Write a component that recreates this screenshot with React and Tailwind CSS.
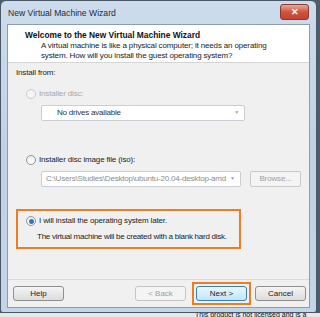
import React from 'react';

const font = { fontFamily: '"Liberation Sans", Arial, sans-serif' };

const Radio = ({ checked, disabled }) => (
  <span
    className={`inline-flex items-center justify-center w-[10px] h-[10px] rounded-full border ${
      disabled ? 'border-[#cbcbcb] bg-[#f4f4f4]' : 'border-[#8a96a3] bg-gradient-to-b from-[#e8ecf0] to-[#ffffff]'
    }`}
  >
    {checked && <span className="w-[5px] h-[5px] rounded-full bg-[#2f78c4]" />}
  </span>
);

const Combo = ({ text, disabled }) => (
  <div className="flex items-center w-[204px] h-[16px] border border-[#c9ced4] bg-white rounded-[2px] pr-[5px]">
    <span
      className={`flex-1 whitespace-nowrap text-[8px] tracking-[-0.2px] ${
        disabled ? 'pl-[15px] text-[#333]' : 'pl-[4px] text-[#8d8d8d]'
      }`}
    >
      {text}
    </span>
    <span className="ml-[4px] text-[5px] text-[#a0a0a0]">▼</span>
  </div>
);

const Btn = ({ children, disabled, primary }) => (
  <div
    className={`flex items-center justify-center w-[51px] h-[15px] rounded-[3px] border text-[8px] ${
      primary
        ? 'border-[#3c7fb1] bg-gradient-to-b from-[#eaf6fd] to-[#bee6fd] text-[#222]'
        : disabled
        ? 'border-[#c4c4c4] bg-[#f4f4f4] text-[#a0a0a0]'
        : 'border-[#8e8f8f] bg-gradient-to-b from-[#f4f4f4] to-[#dcdcdc] text-[#222]'
    }`}
  >
    {children}
  </div>
);

export default function App() {
  return (
    <div className="w-[320px] h-[317px] bg-[#4f5d6b] overflow-hidden" style={font}>
      <div className="w-[317px] h-[313px] rounded-t-[6px] rounded-b-[3px] border border-[#4a5866] bg-gradient-to-b from-[#cddcec] via-[#bfd2e6] to-[#c4d5e7] flex flex-col">
        <div className="h-[23px] flex items-start justify-between pl-[7px] pr-[7px]">
          <span className="mt-[7px] text-[8.6px] leading-[11px] text-[#1e2a36]">New Virtual Machine Wizard</span>
          <div className="mt-[3px] w-[29px] h-[16px] rounded-[3px] border border-[#8a3a30] bg-gradient-to-b from-[#e9a89a] via-[#d0533f] to-[#c24430] flex items-center justify-center">
            <span className="text-[9px] font-bold text-white leading-none">✕</span>
          </div>
        </div>
        <div className="mx-[6px] mb-[4px] flex-1 border border-[#8d9baa] bg-[#f0f0f0] flex flex-col tracking-[-0.15px]">
          <div className="h-[38px] bg-white border-b border-[#d5d5d5] pl-[17px] pt-[4px]">
            <div className="text-[8.4px] font-bold text-[#111] leading-[12px] tracking-normal">Welcome to the New Virtual Machine Wizard</div>
            <div className="pl-[16px] text-[8px] text-[#222] leading-[10px]">
              A virtual machine is like a physical computer; it needs an operating
              <br />
              system. How will you install the guest operating system?
            </div>
          </div>
          <div className="flex-1 flex flex-col pl-[8px] pr-[8px]">
            <div className="mt-[4px] text-[8px] text-[#222] leading-[12px]">Install from:</div>
            <div className="mt-[9px] flex items-center gap-[3px] pl-[10px] text-[8px] text-[#a8a8a8] leading-[12px]">
              <Radio disabled />
              <span>Installer disc:</span>
            </div>
            <div className="mt-[5px] pl-[25px]">
              <Combo text="No drives available" disabled />
            </div>
            <div className="mt-[33px] flex items-center gap-[3px] pl-[10px] text-[8px] text-[#222] leading-[12px]">
              <Radio />
              <span>Installer disc image file (iso):</span>
            </div>
            <div className="mt-[5px] pl-[25px] flex items-center gap-[9px]">
              <Combo text="C:\Users\Studies\Desktop\ubuntu-20.04-desktop-amd" />
              <div className="w-[55px] h-[16px] border border-[#c9c9c9] rounded-[2px] bg-[#f4f4f4] flex items-center justify-center text-[8px] text-[#a0a0a0]">
                Browse...
              </div>
            </div>
            <div className="mt-[22px] w-[225px] h-[40px] border-2 border-[#ef7b22] pl-[8px] pt-[4px]">
              <div className="flex items-center gap-[3px] text-[8px] text-[#222] leading-[12px]">
                <Radio checked />
                <span>I will install the operating system later.</span>
              </div>
              <div className="mt-[4px] pl-[11px] text-[8px] text-[#222] leading-[12px] tracking-[-0.25px] whitespace-nowrap">
                The virtual machine will be created with a blank hard disk.
              </div>
            </div>
          </div>
          <div className="h-[28px] border-t border-[#dadada] flex items-start pt-[6px] pl-[5px] pr-[3px] tracking-normal">
            <Btn>Help</Btn>
            <div className="ml-auto flex items-start">
              <Btn disabled>&lt; Back</Btn>
              <div className="ml-[6px] border-2 border-[#ef7b22] px-[2px] py-[2px] -mt-[4px]">
                <Btn primary>Next &gt;</Btn>
              </div>
              <div className="ml-[4px]">
                <Btn>Cancel</Btn>
              </div>
            </div>
          </div>
        </div>
      </div>
      <div className="pl-[195px] text-[7px] text-[#111] leading-[4px] bg-[#e8e8e8] h-[4px] overflow-hidden">This product is not licensed and is a</div>
    </div>
  );
}
